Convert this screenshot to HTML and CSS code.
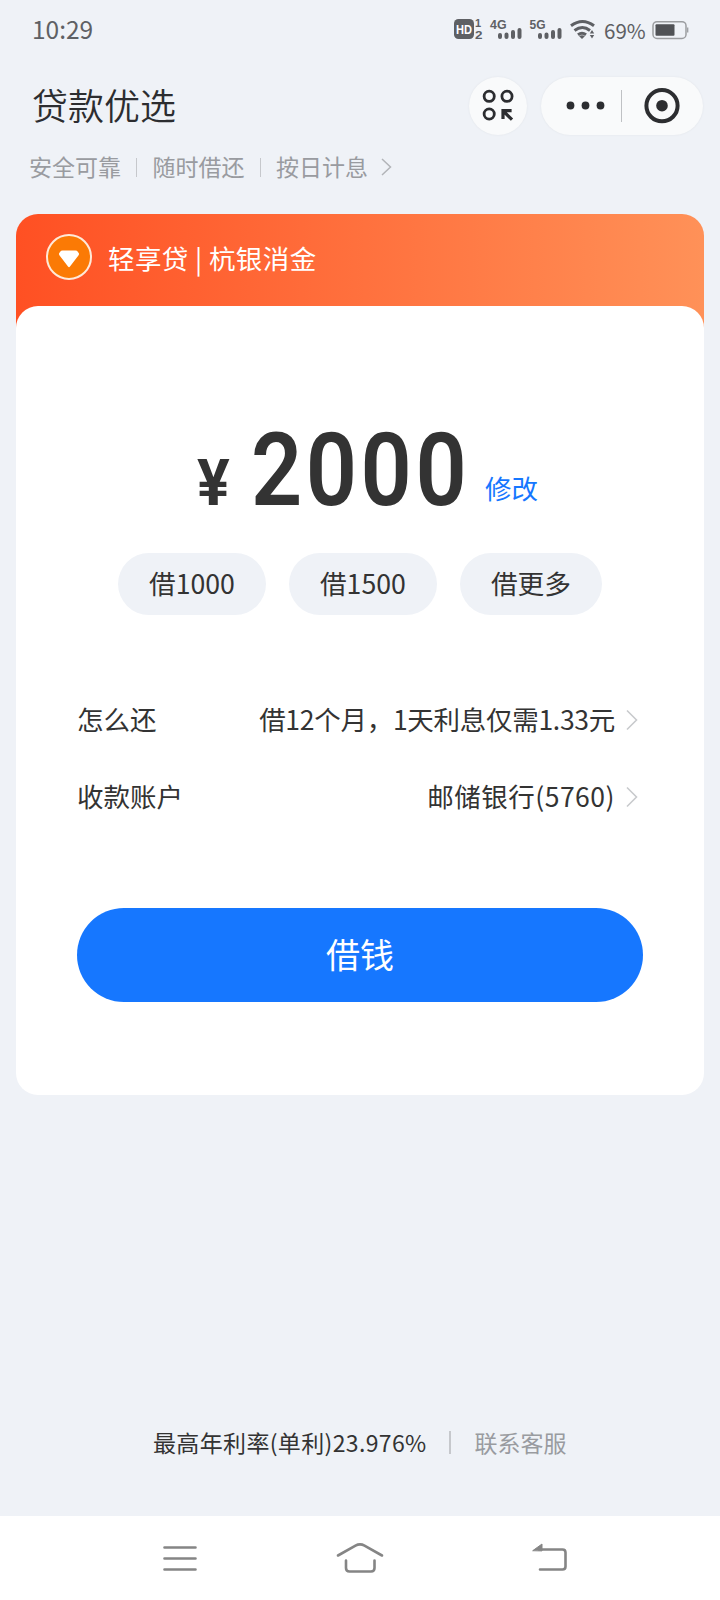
FILE: index.html
```html
<!DOCTYPE html>
<html lang="zh-CN">
<head>
<meta charset="utf-8">
<title>贷款优选</title>
<link rel="stylesheet" href="styles.css">
</head>
<body>
<div class="screen">
  <div class="status">
    <span class="time">10:29</span>
    <svg class="status-icons" width="150" height="40" viewBox="0 0 150 40">
      <rect x="4" y="19" width="20" height="20" rx="4.5" fill="#5e6064"/>
      <text x="6" y="33.500" class="hd" textLength="16" lengthAdjust="spacingAndGlyphs">HD</text>
      <text x="25" y="27" class="sim">1</text>
      <text x="25" y="38.5" class="sim" textLength="7.5" lengthAdjust="spacingAndGlyphs">2</text>
      <text x="40" y="29" class="net" textLength="16.500" lengthAdjust="spacingAndGlyphs">4G</text>
      <text x="79.500" y="29" class="net" textLength="16" lengthAdjust="spacingAndGlyphs">5G</text>
      <g stroke="#5e6064" stroke-width="4" stroke-linecap="round">
        <path d="M50 35v2M56.500 34.500v2.500M63 32v5M69.500 30v7M90 35v2M96.500 34.500v2.500M103 32v5M109.500 30v7"/>
      </g>
      <g fill="none" stroke="#5e6064" stroke-width="3">
        <path d="M121 25.800q11.500-8.500 23 0M124.500 30.500q8-6 15.500 0M128 34.700q4-3 8 0"/>
      </g>
      <path d="M129 36q3-1.500 6 0l-3 3zM142 30l2.200 3.500h-4.400zM142 38.500l2.200-3.500h-4.400z" fill="#5e6064"/>
    </svg>
    <span class="percent">69%</span>
    <svg class="battery" width="38" height="20" viewBox="0 0 38 20">
      <rect x="1" y="1.700" width="33" height="16.800" rx="4" fill="none" stroke="#9b9da0" stroke-width="1.500"/>
      <rect x="3.500" y="4.300" width="19" height="11.500" rx="1" fill="#505256"/>
      <path d="M35.700 7.500v5" stroke="#9b9da0" stroke-width="1.300"/>
    </svg>
  </div>

  <header class="header">
    <h1 class="title">贷款优选</h1>
    <div class="round">
      <svg width="58" height="58" viewBox="0 0 58 58" fill="none" stroke="#2c2d30" stroke-width="2.800">
        <circle cx="20.200" cy="19.300" r="5.100"/><circle cx="38" cy="19.300" r="5.100"/><circle cx="20.200" cy="37" r="5.100"/>
        <path d="M43 42.700L34.300 34M34 42V33.600H42.600" stroke-width="3.200"/>
      </svg>
    </div>
    <div class="capsule">
      <svg width="162" height="58" viewBox="0 0 162 58">
        <g fill="#2c2d30"><circle cx="29.500" cy="28.500" r="3.900"/><circle cx="44.500" cy="28.500" r="3.900"/><circle cx="59.500" cy="28.500" r="3.900"/><circle cx="121" cy="28.700" r="5.800"/></g>
        <path d="M80.500 13v32" stroke="#bfc1c4"/>
        <circle cx="121" cy="28.700" r="15.600" fill="none" stroke="#2c2d30" stroke-width="4"/>
      </svg>
    </div>
  </header>

  <div class="features">
    <span>安全可靠</span><i class="divider"></i><span>随时借还</span><i class="divider"></i><span>按日计息</span>
    <svg class="more" width="12" height="20" viewBox="0 0 12 20"><path d="M1 2l8.500 8L1 18" fill="none" stroke="#b2b4b8" stroke-width="1.500"/></svg>
  </div>

  <main class="card">
    <div class="brand">
      <svg width="48" height="48" viewBox="0 0 48 48">
        <circle cx="24" cy="24" r="22" fill="#fb7a05" stroke="#ffe9d8" stroke-width="2"/>
        <path d="M17.500 17.500h13q1.500 0 2.300 1.200l.9 1.300q.7 1.100-.1 2.200L25 33.500q-1 1.300-2 0l-8.600-11.300q-.8-1.100-.1-2.200l.9-1.300q.8-1.200 2.300-1.200z" fill="#fff"/>
      </svg>
      <span>轻享贷 | 杭银消金</span>
    </div>
    <div class="panel">
      <div class="amount">
        <span class="yen">¥</span>
        <span class="value">2000</span>
        <a class="edit">修改</a>
      </div>
      <div class="options">
        <button class="option">借1000</button>
        <button class="option">借1500</button>
        <button class="option">借更多</button>
      </div>
      <div class="rows">
        <div class="row"><span>怎么还</span><span class="detail tight">借12个月，1天利息仅需1.33元</span>
          <svg width="12" height="22" viewBox="0 0 12 22"><path d="M1 1.500l9.500 9.500L1 20.500" fill="none" stroke="#c8cacd" stroke-width="1.600"/></svg></div>
        <div class="row"><span>收款账户</span><span class="detail loose">邮储银行(5760)</span>
          <svg width="12" height="22" viewBox="0 0 12 22"><path d="M1 1.500l9.500 9.500L1 20.500" fill="none" stroke="#c8cacd" stroke-width="1.600"/></svg></div>
      </div>
      <button class="submit">借钱</button>
    </div>
  </main>

  <footer class="footer">
    <span class="rate">最高年利率(单利)23.976%</span><i class="footer-divider"></i><span>联系客服</span>
  </footer>

  <nav class="nav">
    <svg width="36" height="36" viewBox="0 0 36 36"><path d="M2.500 7.500h31M2.500 18.500h31M2.500 29.500h31"/></svg>
    <svg width="50" height="36" viewBox="0 0 50 36"><path d="M3 15.500L20.500 5.600q4.500-2.400 9 0L47 15.500M11 20.500v7.500q0 3.500 3.500 3.500h21.500q3.500 0 3.500-3.500v-7.500"/></svg>
    <svg width="38" height="36" viewBox="0 0 38 36"><path d="M8 9.500h23.500q3 0 3 3v14q0 3-3 3H9"/><path class="solid" d="M2 10.500L11 4v6.500z"/></svg>
  </nav>
</div>
</body>
</html>
```
FILE: styles.css
```css
* { box-sizing: border-box; }
body {
  margin: 0;
  background: #eff2f7;
  color: #333;
  font-family: "Noto Sans CJK SC", sans-serif;
}
.screen { width: 720px; height: 1600px; display: flex; flex-direction: column; overflow: hidden; }
svg { display: block; flex: none; }
button { border: 0; margin: 0; font: inherit; color: inherit; }
span { white-space: nowrap; }

.status { height: 60px; display: flex; align-items: flex-start; padding-left: 32px; color: #5e6064; }
.time { width: 418px; font-size: 24.5px; line-height: 57px; }
.hd { font: bold 13px "Liberation Sans", sans-serif; fill: #fff; }
.sim { font: bold 11px "Liberation Sans", sans-serif; fill: #5e6064; }
.net { font: bold 13.5px "Liberation Sans", sans-serif; fill: #5e6064; }
.percent { width: 48px; margin-left: 4px; font-size: 20.5px; line-height: 61px; }
.battery { margin-top: 20px; }

.header { height: 90px; display: flex; align-items: flex-start; padding: 17px 17px 0 32px; }
.title { flex: 1; margin: 0; font-size: 36px; font-weight: 350; line-height: 54px; color: #2c2d30; }
.round, .capsule { height: 58px; border-radius: 29px; background: #f9fafb; box-shadow: 0 0 2px #dfe2e7; }
.round { width: 58px; margin-right: 14px; }
.capsule { width: 162px; }

.features { height: 64px; display: flex; align-items: flex-start; padding-left: 29px; font-size: 23px; line-height: 32px; color: #999ba0; }
.divider { width: 1px; height: 19px; margin: 8px 15.25px 0; background: #c6c8cc; }
.more { margin: 7px 0 0 13px; }

.card { width: 688px; height: 881px; margin-left: 16px; border-radius: 22px; background: linear-gradient(90deg, #ff5023, #ff9158) top / 100% 130px no-repeat; }
.brand { height: 92px; display: flex; align-items: center; gap: 15px; padding: 0 0 6px 29px; font-size: 26.5px; letter-spacing: .4px; color: #fff; }
.panel { height: 789px; padding: 114px 61px 0; border-radius: 22px; background: #fff; }
.amount { height: 100px; display: flex; align-items: baseline; }
.yen { margin-left: 120px; width: 54px; font: 700 65px/100px Roboto, sans-serif; transform: scaleX(.94); transform-origin: left; }
.value { width: 234px; font: 600 102px/100px Roboto, sans-serif; transform: scaleX(.88); transform-origin: left; letter-spacing: 4px; }
.edit { font-size: 26.5px; line-height: 30px; color: #1677ff; transform: translateY(-6px); }
.options { height: 62px; margin-top: 33px; padding-left: 41px; display: flex; gap: 23px; }
.option { height: 62px; padding: 0 31px 2px; border-radius: 31px; background: #eff2f7; font-size: 26.7px; line-height: 60px; }
.rows { margin-top: 66px; }
.row { height: 77px; display: flex; align-items: center; font-size: 26.5px; padding-right: 5px; }
.row span { margin-top: -2px; }
.row .detail { margin-left: auto; margin-right: 11px; }
.tight { letter-spacing: -.28px; }
.loose { letter-spacing: .5px; }
.submit { display: block; width: 566px; height: 94px; margin-top: 73px; padding: 0 0 3px; border-radius: 47px; background: #1677ff; color: #fff; font-size: 34px; }

.footer { flex: 1; display: flex; align-items: flex-end; padding: 0 0 57px 153px; font-size: 23px; line-height: 34px; color: #999ba0; }
.rate { color: #333; letter-spacing: .35px; }
.footer-divider { width: 2px; height: 23px; margin: 0 24px 5px 22px; background: #c6c8cc; }

.nav { height: 84px; display: flex; padding: 24px 0 0 162px; background: #fff; }
.nav svg { fill: none; stroke: #858585; stroke-width: 2.6; stroke-linecap: round; }
.nav svg + svg { margin-left: 137px; }
.nav svg + svg + svg { margin-left: 146px; }
.nav .solid { fill: #858585; stroke-width: 1; }
```
